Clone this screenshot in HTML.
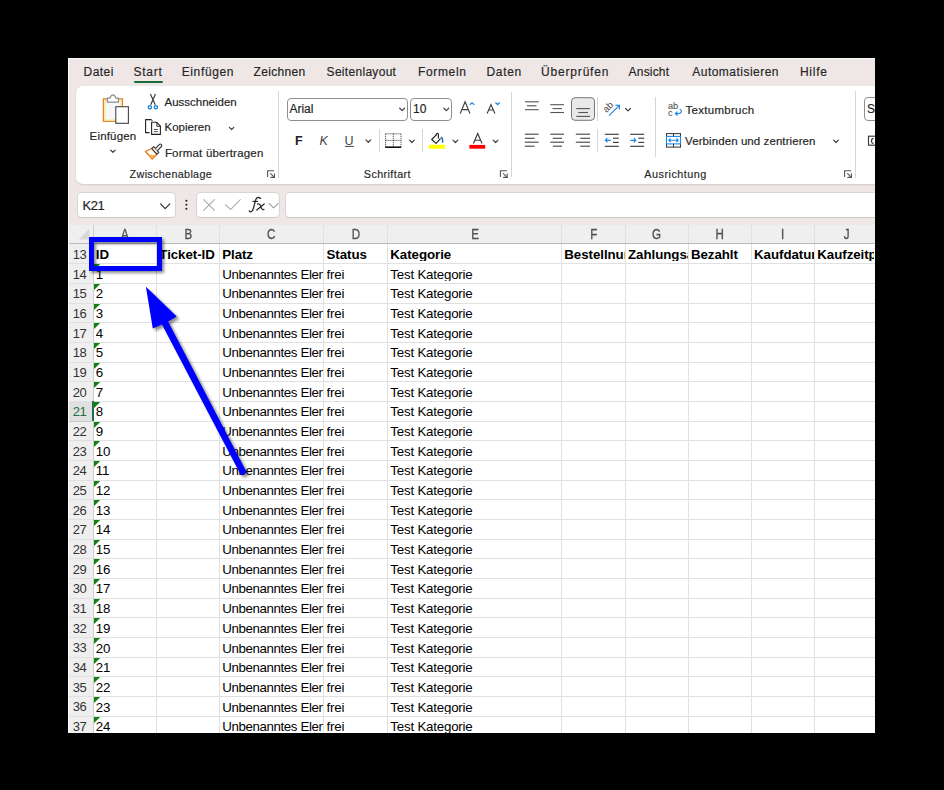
<!DOCTYPE html>
<html><head><meta charset="utf-8"><style>
html,body{margin:0;padding:0;}
body{width:944px;height:790px;background:#000;position:relative;overflow:hidden;font-family:"Liberation Sans", sans-serif;}
.t{position:absolute;white-space:pre;font-family:"Liberation Sans", sans-serif;}
.cell{overflow:hidden;}
</style></head><body>
<div style="position:absolute;left:68px;top:58px;width:807px;height:675px;background:#EFE7E6;"></div>
<div style="position:absolute;left:68px;top:58px;width:807px;height:1px;background:#FAFAFA;"></div>
<div style="position:absolute;left:68px;top:58px;width:1px;height:675px;background:#FAFAFA;"></div>
<div class="t" style="left:83.5px;top:65.64px;font-size:12px;line-height:12px;font-weight:400;color:#262626;letter-spacing:0.48px;-webkit-text-stroke:0.18px currentColor;">Datei</div>
<div class="t" style="left:133.5px;top:65.64px;font-size:12px;line-height:12px;font-weight:400;color:#262626;letter-spacing:0.75px;-webkit-text-stroke:0.18px currentColor;">Start</div>
<div class="t" style="left:181.7px;top:65.64px;font-size:12px;line-height:12px;font-weight:400;color:#262626;letter-spacing:0.63px;-webkit-text-stroke:0.18px currentColor;">Einfügen</div>
<div class="t" style="left:253.5px;top:65.64px;font-size:12px;line-height:12px;font-weight:400;color:#262626;letter-spacing:0.34px;-webkit-text-stroke:0.18px currentColor;">Zeichnen</div>
<div class="t" style="left:326.59999999999997px;top:65.64px;font-size:12px;line-height:12px;font-weight:400;color:#262626;letter-spacing:0.30000000000000004px;-webkit-text-stroke:0.18px currentColor;">Seitenlayout</div>
<div class="t" style="left:418.09999999999997px;top:65.64px;font-size:12px;line-height:12px;font-weight:400;color:#262626;letter-spacing:0.63px;-webkit-text-stroke:0.18px currentColor;">Formeln</div>
<div class="t" style="left:486.4px;top:65.64px;font-size:12px;line-height:12px;font-weight:400;color:#262626;letter-spacing:0.72px;-webkit-text-stroke:0.18px currentColor;">Daten</div>
<div class="t" style="left:541.1px;top:65.64px;font-size:12px;line-height:12px;font-weight:400;color:#262626;letter-spacing:0.81px;-webkit-text-stroke:0.18px currentColor;">Überprüfen</div>
<div class="t" style="left:628.6px;top:65.64px;font-size:12px;line-height:12px;font-weight:400;color:#262626;letter-spacing:0.18px;-webkit-text-stroke:0.18px currentColor;">Ansicht</div>
<div class="t" style="left:692.3000000000001px;top:65.64px;font-size:12px;line-height:12px;font-weight:400;color:#262626;letter-spacing:0.47000000000000003px;-webkit-text-stroke:0.18px currentColor;">Automatisieren</div>
<div class="t" style="left:799.9000000000001px;top:65.64px;font-size:12px;line-height:12px;font-weight:400;color:#262626;letter-spacing:0.75px;-webkit-text-stroke:0.18px currentColor;">Hilfe</div>
<div style="position:absolute;left:134.3px;top:81px;width:29px;height:2px;background:#1B6B3A;border-radius:1px"></div>
<div style="position:absolute;left:76px;top:86px;width:820px;height:98px;background:#FFFFFF;border-radius:7px;box-shadow:0 1px 2px rgba(0,0,0,0.12)"></div>
<div class="t" style="left:89.6px;top:130.77px;font-size:11.5px;line-height:11.5px;font-weight:400;color:#262626;letter-spacing:0.17px;-webkit-text-stroke:0.18px currentColor;">Einfügen</div>
<div class="t" style="left:164.5px;top:96.77px;font-size:11.5px;line-height:11.5px;font-weight:400;color:#262626;letter-spacing:0px;-webkit-text-stroke:0.18px currentColor;">Ausschneiden</div>
<div class="t" style="left:164.5px;top:121.87px;font-size:11.5px;line-height:11.5px;font-weight:400;color:#262626;letter-spacing:0px;-webkit-text-stroke:0.18px currentColor;">Kopieren</div>
<div class="t" style="left:164.9px;top:147.67px;font-size:11.5px;line-height:11.5px;font-weight:400;color:#262626;letter-spacing:0.2px;-webkit-text-stroke:0.18px currentColor;">Format übertragen</div>
<div class="t" style="left:129.60000000000002px;top:169.06px;font-size:10.8px;line-height:10.8px;font-weight:400;color:#2A2A2A;letter-spacing:0.32px;-webkit-text-stroke:0.18px currentColor;">Zwischenablage</div>
<div class="t" style="left:363.8px;top:168.96px;font-size:10.8px;line-height:10.8px;font-weight:400;color:#2A2A2A;letter-spacing:0.39px;-webkit-text-stroke:0.18px currentColor;">Schriftart</div>
<div class="t" style="left:644.3px;top:169.06px;font-size:10.8px;line-height:10.8px;font-weight:400;color:#2A2A2A;letter-spacing:0.5px;-webkit-text-stroke:0.18px currentColor;">Ausrichtung</div>
<div class="t" style="left:685.5px;top:104.67px;font-size:11.5px;line-height:11.5px;font-weight:400;color:#262626;letter-spacing:0.29px;-webkit-text-stroke:0.18px currentColor;">Textumbruch</div>
<div class="t" style="left:685.0999999999999px;top:136.37px;font-size:11.5px;line-height:11.5px;font-weight:400;color:#262626;letter-spacing:0.08px;-webkit-text-stroke:0.18px currentColor;">Verbinden und zentrieren</div>
<div style="position:absolute;left:278.2px;top:91px;width:1px;height:86.69999999999999px;background:#D6D6D6;"></div>
<div style="position:absolute;left:511.0px;top:91.6px;width:1px;height:85.80000000000001px;background:#D6D6D6;"></div>
<div style="position:absolute;left:855.1px;top:91px;width:1px;height:86.5px;background:#D6D6D6;"></div>
<div style="position:absolute;left:378.9px;top:129.4px;width:1px;height:22.900000000000006px;background:#D6D6D6;"></div>
<div style="position:absolute;left:421.8px;top:129.4px;width:1px;height:22.900000000000006px;background:#D6D6D6;"></div>
<div style="position:absolute;left:596.9px;top:97px;width:1px;height:23.5px;background:#D6D6D6;"></div>
<div style="position:absolute;left:596.9px;top:129px;width:1px;height:23.30000000000001px;background:#D6D6D6;"></div>
<div style="position:absolute;left:655.0px;top:96.7px;width:1px;height:60.8px;background:#D6D6D6;"></div>
<div style="position:absolute;left:287px;top:97.6px;width:120.5px;height:23.2px;background:#fff;box-sizing:border-box;border:1px solid #8F8F8F;border-radius:4px"></div>
<div class="t" style="left:289.4px;top:103.14px;font-size:12px;line-height:12px;font-weight:400;color:#1F1F1F;letter-spacing:0px;-webkit-text-stroke:0.18px currentColor;">Arial</div>
<div style="position:absolute;left:410.3px;top:97.6px;width:42.2px;height:23.2px;background:#fff;box-sizing:border-box;border:1px solid #8F8F8F;border-radius:4px"></div>
<div class="t" style="left:413.0px;top:103.34px;font-size:12px;line-height:12px;font-weight:400;color:#1F1F1F;letter-spacing:0px;-webkit-text-stroke:0.18px currentColor;">10</div>
<div style="position:absolute;left:864.3px;top:97.4px;width:30px;height:23.3px;background:#fff;box-sizing:border-box;border:1px solid #8F8F8F;border-radius:4px"></div>
<div class="t" style="left:867px;top:103.34px;font-size:12px;line-height:12px;font-weight:400;color:#1F1F1F;letter-spacing:0px;-webkit-text-stroke:0.18px currentColor;">St</div>
<div style="position:absolute;left:76.5px;top:192px;width:99.8px;height:25.7px;background:#fff;box-sizing:border-box;border:1px solid #D9D5D5;border-bottom-color:#CAC6C6;border-radius:5px"></div>
<div class="t" style="left:82.6px;top:198.90px;font-size:13px;line-height:13px;font-weight:400;color:#1F1F1F;letter-spacing:-0.45px;-webkit-text-stroke:0.18px currentColor;">K21</div>
<div style="position:absolute;left:196.3px;top:192px;width:84.2px;height:25.7px;background:#fff;box-sizing:border-box;border:1px solid #D9D5D5;border-bottom-color:#CAC6C6;border-radius:5px"></div>
<div style="position:absolute;left:285.2px;top:192px;width:600px;height:25.7px;background:#fff;box-sizing:border-box;border:1px solid #D9D5D5;border-bottom-color:#CAC6C6;border-radius:5px"></div>
<svg style="position:absolute;left:0px;top:0px;pointer-events:none" width="944" height="790" viewBox="0 0 944 790"><rect x="103.4" y="98.9" width="19" height="22.4" fill="#FBF6EC" stroke="#E9821A" stroke-width="1.3"/><rect x="105" y="100.4" width="15.8" height="19.5" fill="#F7F7F7" stroke="#FBE7A6" stroke-width="1.2"/><path d="M107.3 102.2 V98.2 H109.8 C110.5 96.4 111.5 94.8 112.9 94.8 C114.3 94.8 115.3 96.4 116 98.2 H118.5 V102.2 Z" fill="#fff" stroke="#8C8C8C" stroke-width="1.2" stroke-linejoin="round"/><rect x="115.8" y="106.7" width="12.6" height="16.6" fill="#fff" stroke="#444" stroke-width="1.1"/><path d="M110.60 150.10 L112.90 152.30 L115.20 150.10" fill="none" stroke="#444" stroke-width="1.3" stroke-linecap="round" stroke-linejoin="round"/><path d="M150.4 94 L155.2 104.8 M155.5 94 L150.7 104.8" stroke="#333" stroke-width="1.1" fill="none"/><circle cx="149.9" cy="107.3" r="1.6" fill="none" stroke="#1A7FD4" stroke-width="1.3"/><circle cx="155.9" cy="107.3" r="1.6" fill="none" stroke="#1A7FD4" stroke-width="1.3"/><path d="M149.6 132.6 H145.6 V119.6 H151 L152.4 120.6" fill="none" stroke="#222" stroke-width="1.1" stroke-linejoin="round"/><path d="M151.6 122.3 H156.8 L160.4 126.2 V134.4 H151.6 Z" fill="#fff" stroke="#222" stroke-width="1.1" stroke-linejoin="round"/><path d="M156.8 122.3 V126.3 H160.4" fill="none" stroke="#222" stroke-width="0.9"/><path d="M153.9 129.5 H157.8 M153.9 131.6 H157.8" stroke="#333" stroke-width="0.9"/><path d="M145.6 151.5 L151.6 148.5 L157 154.2 L152.2 159 Z" fill="#fff" stroke="#E8740F" stroke-width="1.3" stroke-linejoin="round"/><path d="M147.4 154.3 L155.4 155.8 L152.2 159 Z" fill="#F09A30"/><path d="M150.2 156 L153.4 156.5 L152 157.8 Z" fill="#F8E08A"/><path d="M151.9 148.5 L153.8 146.7 L158.8 152.3 L156.9 154.1 Z" fill="#fff" stroke="#333" stroke-width="1.1" stroke-linejoin="round"/><path d="M155.4 148.6 L159.4 144.4 C159.9 143.9 160.7 143.9 161.2 144.4 L161.4 144.7 C161.9 145.2 161.9 146 161.4 146.5 L157.4 150.7" fill="#fff" stroke="#333" stroke-width="1.1" stroke-linejoin="round"/><path d="M229.40 127.30 L231.60 129.50 L233.80 127.30" fill="none" stroke="#444" stroke-width="1.2" stroke-linecap="round" stroke-linejoin="round"/><g transform="translate(0,0)" fill="none" stroke="#555" stroke-width="1.1" stroke-linecap="round"><path d="M267.6 176.4 V170.7 H273.6"/><path d="M270.6 173.6 L274.3 177.3"/><path d="M270.8 177.4 H274.4 V173.8"/></g><g transform="translate(232.8,0)" fill="none" stroke="#555" stroke-width="1.1" stroke-linecap="round"><path d="M267.6 176.4 V170.7 H273.6"/><path d="M270.6 173.6 L274.3 177.3"/><path d="M270.8 177.4 H274.4 V173.8"/></g><g transform="translate(577,0)" fill="none" stroke="#555" stroke-width="1.1" stroke-linecap="round"><path d="M267.6 176.4 V170.7 H273.6"/><path d="M270.6 173.6 L274.3 177.3"/><path d="M270.8 177.4 H274.4 V173.8"/></g><path d="M399.70 108.20 L402.10 110.60 L404.50 108.20" fill="none" stroke="#444" stroke-width="1.25" stroke-linecap="round" stroke-linejoin="round"/><path d="M443.90 108.20 L446.30 110.60 L448.70 108.20" fill="none" stroke="#444" stroke-width="1.25" stroke-linecap="round" stroke-linejoin="round"/><path d="M365.90 139.90 L368.30 142.30 L370.70 139.90" fill="none" stroke="#444" stroke-width="1.25" stroke-linecap="round" stroke-linejoin="round"/><path d="M409.50 140.10 L411.90 142.50 L414.30 140.10" fill="none" stroke="#444" stroke-width="1.25" stroke-linecap="round" stroke-linejoin="round"/><path d="M453.00 140.10 L455.40 142.50 L457.80 140.10" fill="none" stroke="#444" stroke-width="1.25" stroke-linecap="round" stroke-linejoin="round"/><path d="M493.20 140.10 L495.60 142.50 L498.00 140.10" fill="none" stroke="#444" stroke-width="1.25" stroke-linecap="round" stroke-linejoin="round"/><path d="M625.60 108.50 L628.00 110.90 L630.40 108.50" fill="none" stroke="#444" stroke-width="1.25" stroke-linecap="round" stroke-linejoin="round"/><path d="M833.60 140.10 L836.00 142.50 L838.40 140.10" fill="none" stroke="#444" stroke-width="1.25" stroke-linecap="round" stroke-linejoin="round"/><path d="M460.2 113.6 L465.1 101.8 L470 113.6 M462.4 109.6 H467.8" fill="none" stroke="#3A3A3A" stroke-width="1.15"/><path d="M469.7 104.8 L472 102.8 L474.4 104.8" fill="none" stroke="#2B88D8" stroke-width="1.3"/><path d="M487.1 113.6 L491 104.6 L494.9 113.6 M488.6 110 H493.4" fill="none" stroke="#3A3A3A" stroke-width="1.15"/><path d="M495.4 102.6 L497.6 104.6 L499.8 102.6" fill="none" stroke="#2B88D8" stroke-width="1.3"/><text x="295" y="144.8" font-family="Liberation Sans" font-weight="700" font-size="12.5" fill="#222">F</text><text x="319.5" y="144.8" font-family="Liberation Sans" font-style="italic" font-size="12.5" fill="#444">K</text><text x="344.6" y="144.8" font-family="Liberation Sans" font-size="12.5" fill="#444">U</text><path d="M345 146.4 H354" stroke="#444" stroke-width="1"/><path d="M385.6 133.8 H401 M385.6 133.8 V147 M401 133.8 V147 M393.3 133.8 V147 M385.6 140.4 H401" fill="none" stroke="#333" stroke-width="1" stroke-dasharray="1 1"/><path d="M385.2 147.2 H401.2" stroke="#111" stroke-width="1.6"/><path d="M440.6 138.3 L436.1 143.4 L431.7 139.5 L436.3 134.9" fill="#fff" stroke="#222" stroke-width="1.15" stroke-linejoin="round"/><path d="M436.3 135.4 V134.2 C436.3 132.9 438.4 132.9 438.4 134.2 V138.6" fill="none" stroke="#222" stroke-width="1.15"/><path d="M440.9 137.2 C442.4 137.4 442.8 139.6 442.6 142.6" fill="none" stroke="#1565C0" stroke-width="1.5"/><rect x="429" y="144.8" width="16" height="4" fill="#FFFF00"/><path d="M473.4 143.4 L477.7 133.4 L482 143.4 M474.9 140.2 H480.5" fill="none" stroke="#3A3A3A" stroke-width="1.15"/><rect x="469.4" y="144.9" width="15.8" height="3.8" fill="#FF0000"/><rect x="571.5" y="97.7" width="23" height="22.6" rx="3.5" fill="#E9E9E9" stroke="#777" stroke-width="1"/><path d="M525 101.8 H538.7" stroke="#555" stroke-width="1.1"/><path d="M527 105.8 H536.5" stroke="#555" stroke-width="1.1"/><path d="M525 109.7 H538.7" stroke="#555" stroke-width="1.1"/><path d="M550.3 104.7 H564" stroke="#555" stroke-width="1.1"/><path d="M552.5 108.6 H562" stroke="#555" stroke-width="1.1"/><path d="M550.3 112.5 H564" stroke="#555" stroke-width="1.1"/><path d="M576.3 108.6 H590" stroke="#555" stroke-width="1.1"/><path d="M578.3 112.5 H588" stroke="#555" stroke-width="1.1"/><path d="M576.3 116.4 H590" stroke="#555" stroke-width="1.1"/><path d="M524.8 134.2 H538.6" stroke="#444" stroke-width="1.1"/><path d="M524.8 138.3 H534.5" stroke="#444" stroke-width="1.1"/><path d="M524.8 142.2 H538.6" stroke="#444" stroke-width="1.1"/><path d="M524.8 146.2 H534.5" stroke="#444" stroke-width="1.1"/><path d="M550.3 134.2 H564" stroke="#444" stroke-width="1.1"/><path d="M552.8 138.3 H562" stroke="#444" stroke-width="1.1"/><path d="M550.3 142.2 H564" stroke="#444" stroke-width="1.1"/><path d="M552.8 146.2 H562" stroke="#444" stroke-width="1.1"/><path d="M575.8 134.2 H590" stroke="#444" stroke-width="1.1"/><path d="M580.3 138.3 H590" stroke="#444" stroke-width="1.1"/><path d="M575.8 142.2 H590" stroke="#444" stroke-width="1.1"/><path d="M580.3 146.2 H590" stroke="#444" stroke-width="1.1"/><path d="M604.8 134.3 H618.8" stroke="#333" stroke-width="1.1"/><path d="M604.8 146.3 H618.8" stroke="#333" stroke-width="1.1"/><path d="M613.0 138.2 H618.8" stroke="#333" stroke-width="1.1"/><path d="M613.0 142.4 H618.8" stroke="#333" stroke-width="1.1"/><path d="M610.8 140.3 H605.4 M607.4 138.2 L605.4 140.3 L607.4 142.4" fill="none" stroke="#1E88E5" stroke-width="1.2"/><path d="M630.2 134.3 H644.2" stroke="#333" stroke-width="1.1"/><path d="M630.2 146.3 H644.2" stroke="#333" stroke-width="1.1"/><path d="M638.4000000000001 138.2 H644.2" stroke="#333" stroke-width="1.1"/><path d="M638.4000000000001 142.4 H644.2" stroke="#333" stroke-width="1.1"/><path d="M630.4000000000001 140.3 H635.8000000000001 M633.8000000000001 138.2 L635.8000000000001 140.3 L633.8000000000001 142.4" fill="none" stroke="#1E88E5" stroke-width="1.2"/><text x="0" y="0" font-family="Liberation Sans" font-size="9.5" fill="#444" transform="translate(606.5,113) rotate(-45)">ab</text><path d="M609 115.6 L619.2 105.6 M615.4 105.4 H619.4 V109.4" fill="none" stroke="#2B88D8" stroke-width="1.2"/><text x="668" y="108.8" font-family="Liberation Sans" font-size="9.2" fill="#444">ab</text><text x="668" y="116.2" font-family="Liberation Sans" font-size="9.2" fill="#444">c</text><path d="M680 109.2 C682.6 110.8 681.4 113.6 678 113.6 H675.4 M677.4 111.6 L675.4 113.6 L677.4 115.6" fill="none" stroke="#1E88E5" stroke-width="1.2"/><rect x="666.5" y="133.6" width="14" height="13.5" fill="#fff" stroke="#333" stroke-width="1"/><rect x="666.5" y="136.4" width="14" height="7.5" fill="#fff" stroke="#1E88E5" stroke-width="1.1"/><path d="M673.5 133.6 V136.4 M673.5 143.9 V147.1" stroke="#333" stroke-width="1"/><path d="M668.8 140.2 H678.2 M670.6 138.4 L668.8 140.2 L670.6 142 M676.4 138.4 L678.2 140.2 L676.4 142" fill="none" stroke="#1E88E5" stroke-width="1.1"/><rect x="868.5" y="136.2" width="10" height="9" fill="#fff" stroke="#333" stroke-width="1.1"/><path d="M873.5 138.4 C871 138.4 870.6 143.4 873.5 143.4" fill="none" stroke="#333" stroke-width="1.1"/></svg>
<svg style="position:absolute;left:0px;top:0px;pointer-events:none" width="944" height="790" viewBox="0 0 944 790"><path d="M160.60 203.90 L165.20 208.70 L169.80 203.90" fill="none" stroke="#333" stroke-width="1.2" stroke-linecap="round" stroke-linejoin="round"/><circle cx="186.4" cy="200.8" r="1.05" fill="#222"/><circle cx="186.4" cy="204.8" r="1.05" fill="#222"/><circle cx="186.4" cy="208.7" r="1.05" fill="#222"/><path d="M203.3 199.4 L214.8 210.7 M214.8 199.4 L203.3 210.7" stroke="#A8A8A8" stroke-width="1.1"/><path d="M225.2 204.5 L230.7 209.4 L240.6 199.3" fill="none" stroke="#B0B0B0" stroke-width="1.1"/><path d="M249.2 210.9 C250.6 212.8 252.6 211.6 253.4 208.4 L255.6 200.2 C256.3 197.8 258.2 196.6 260.6 198.3" fill="none" stroke="#2A2A2A" stroke-width="1.3" stroke-linecap="round"/><path d="M252.4 201.4 H258" stroke="#222" stroke-width="1.1"/><path d="M257.4 204 Q259.8 203.2 260.8 206.6 Q261.8 210.2 264 209.4 M264.2 203.9 L256.8 210" fill="none" stroke="#2A2A2A" stroke-width="1.25" stroke-linecap="round"/><path d="M269.00 203.40 L273.60 207.80 L278.20 203.40" fill="none" stroke="#999" stroke-width="1.1" stroke-linecap="round" stroke-linejoin="round"/></svg>
<div style="position:absolute;left:69px;top:224.7px;width:806px;height:508.3px;background:#FFFFFF;"></div>
<div style="position:absolute;left:69px;top:224.7px;width:806px;height:19.30000000000001px;background:#EFEFEF;"></div>
<div style="position:absolute;left:69px;top:224.7px;width:24px;height:508.3px;background:#EFEFEF;"></div>
<div style="position:absolute;left:69px;top:263.18px;width:806px;height:1px;background:#E0E0E0;"></div>
<div style="position:absolute;left:69px;top:282.86px;width:806px;height:1px;background:#E0E0E0;"></div>
<div style="position:absolute;left:69px;top:302.54px;width:806px;height:1px;background:#E0E0E0;"></div>
<div style="position:absolute;left:69px;top:322.22px;width:806px;height:1px;background:#E0E0E0;"></div>
<div style="position:absolute;left:69px;top:341.9px;width:806px;height:1px;background:#E0E0E0;"></div>
<div style="position:absolute;left:69px;top:361.58px;width:806px;height:1px;background:#E0E0E0;"></div>
<div style="position:absolute;left:69px;top:381.26px;width:806px;height:1px;background:#E0E0E0;"></div>
<div style="position:absolute;left:69px;top:400.94px;width:806px;height:1px;background:#E0E0E0;"></div>
<div style="position:absolute;left:69px;top:420.62px;width:806px;height:1px;background:#E0E0E0;"></div>
<div style="position:absolute;left:69px;top:440.3px;width:806px;height:1px;background:#E0E0E0;"></div>
<div style="position:absolute;left:69px;top:459.98px;width:806px;height:1px;background:#E0E0E0;"></div>
<div style="position:absolute;left:69px;top:479.65999999999997px;width:806px;height:1px;background:#E0E0E0;"></div>
<div style="position:absolute;left:69px;top:499.34000000000003px;width:806px;height:1px;background:#E0E0E0;"></div>
<div style="position:absolute;left:69px;top:519.02px;width:806px;height:1px;background:#E0E0E0;"></div>
<div style="position:absolute;left:69px;top:538.7px;width:806px;height:1px;background:#E0E0E0;"></div>
<div style="position:absolute;left:69px;top:558.38px;width:806px;height:1px;background:#E0E0E0;"></div>
<div style="position:absolute;left:69px;top:578.06px;width:806px;height:1px;background:#E0E0E0;"></div>
<div style="position:absolute;left:69px;top:597.74px;width:806px;height:1px;background:#E0E0E0;"></div>
<div style="position:absolute;left:69px;top:617.4200000000001px;width:806px;height:1px;background:#E0E0E0;"></div>
<div style="position:absolute;left:69px;top:637.1px;width:806px;height:1px;background:#E0E0E0;"></div>
<div style="position:absolute;left:69px;top:656.78px;width:806px;height:1px;background:#E0E0E0;"></div>
<div style="position:absolute;left:69px;top:676.46px;width:806px;height:1px;background:#E0E0E0;"></div>
<div style="position:absolute;left:69px;top:696.14px;width:806px;height:1px;background:#E0E0E0;"></div>
<div style="position:absolute;left:69px;top:715.8199999999999px;width:806px;height:1px;background:#E0E0E0;"></div>
<div style="position:absolute;left:92.5px;top:224.7px;width:1px;height:508.3px;background:#CFCFCF;"></div>
<div style="position:absolute;left:156.0px;top:224.7px;width:1px;height:508.3px;background:#E0E0E0;"></div>
<div style="position:absolute;left:218.9px;top:224.7px;width:1px;height:508.3px;background:#E0E0E0;"></div>
<div style="position:absolute;left:323.25px;top:224.7px;width:1px;height:508.3px;background:#E0E0E0;"></div>
<div style="position:absolute;left:387.0px;top:224.7px;width:1px;height:508.3px;background:#E0E0E0;"></div>
<div style="position:absolute;left:561.0px;top:224.7px;width:1px;height:508.3px;background:#E0E0E0;"></div>
<div style="position:absolute;left:624.75px;top:224.7px;width:1px;height:508.3px;background:#E0E0E0;"></div>
<div style="position:absolute;left:687.6px;top:224.7px;width:1px;height:508.3px;background:#E0E0E0;"></div>
<div style="position:absolute;left:750.75px;top:224.7px;width:1px;height:508.3px;background:#E0E0E0;"></div>
<div style="position:absolute;left:814.0px;top:224.7px;width:1px;height:508.3px;background:#E0E0E0;"></div>
<div style="position:absolute;left:69px;top:243px;width:806px;height:1px;background:#B9B9B9;"></div>
<div style="position:absolute;left:69px;top:401.44px;width:24px;height:19.68px;background:#E0E0E0;"></div>
<div style="position:absolute;left:92px;top:400.94px;width:2px;height:20.18px;background:#1E7145;"></div>
<div style="position:absolute;left:69px;top:420.62px;width:23px;height:1px;background:#C8C8C8;"></div>
<div class="t" style="left:93px;width:63.5px;text-align:center;top:227.82px;font-size:13.8px;line-height:13.8px;color:#505050;transform:scaleX(0.84);-webkit-text-stroke:0.3px #505050">A</div>
<div class="t" style="left:156.5px;width:62.900000000000006px;text-align:center;top:227.82px;font-size:13.8px;line-height:13.8px;color:#505050;transform:scaleX(0.84);-webkit-text-stroke:0.3px #505050">B</div>
<div class="t" style="left:219.4px;width:104.35px;text-align:center;top:227.82px;font-size:13.8px;line-height:13.8px;color:#505050;transform:scaleX(0.84);-webkit-text-stroke:0.3px #505050">C</div>
<div class="t" style="left:323.75px;width:63.75px;text-align:center;top:227.82px;font-size:13.8px;line-height:13.8px;color:#505050;transform:scaleX(0.84);-webkit-text-stroke:0.3px #505050">D</div>
<div class="t" style="left:387.5px;width:174.0px;text-align:center;top:227.82px;font-size:13.8px;line-height:13.8px;color:#505050;transform:scaleX(0.84);-webkit-text-stroke:0.3px #505050">E</div>
<div class="t" style="left:561.5px;width:63.75px;text-align:center;top:227.82px;font-size:13.8px;line-height:13.8px;color:#505050;transform:scaleX(0.84);-webkit-text-stroke:0.3px #505050">F</div>
<div class="t" style="left:625.25px;width:62.85000000000002px;text-align:center;top:227.82px;font-size:13.8px;line-height:13.8px;color:#505050;transform:scaleX(0.84);-webkit-text-stroke:0.3px #505050">G</div>
<div class="t" style="left:688.1px;width:63.14999999999998px;text-align:center;top:227.82px;font-size:13.8px;line-height:13.8px;color:#505050;transform:scaleX(0.84);-webkit-text-stroke:0.3px #505050">H</div>
<div class="t" style="left:751.25px;width:63.25px;text-align:center;top:227.82px;font-size:13.8px;line-height:13.8px;color:#505050;transform:scaleX(0.84);-webkit-text-stroke:0.3px #505050">I</div>
<div class="t" style="left:814.5px;width:63.299999999999955px;text-align:center;top:227.82px;font-size:13.8px;line-height:13.8px;color:#505050;transform:scaleX(0.84);-webkit-text-stroke:0.3px #505050">J</div>
<svg style="position:absolute;left:78px;top:228px;" width="12" height="12" viewBox="0 0 12 12"><path d="M11.5 0.5 L11.5 11.5 L0.5 11.5 Z" fill="#D9D9D9"/></svg>
<div class="t" style="left:67.6px;width:24px;text-align:center;top:247.83px;font-size:13px;line-height:13px;letter-spacing:-0.5px;color:#333">13</div>
<div class="t cell" style="left:95.8px;width:60.2px;top:247.92px;font-size:13.3px;line-height:13.3px;font-weight:700;letter-spacing:-0.05px;color:#000">ID</div>
<div class="t cell" style="left:159.3px;width:59.60000000000001px;top:247.92px;font-size:13.3px;line-height:13.3px;font-weight:700;letter-spacing:-0.05px;color:#000">Ticket-ID</div>
<div class="t cell" style="left:222.20000000000002px;width:101.05px;top:247.92px;font-size:13.3px;line-height:13.3px;font-weight:700;letter-spacing:-0.05px;color:#000">Platz</div>
<div class="t cell" style="left:326.55px;width:60.45px;top:247.92px;font-size:13.3px;line-height:13.3px;font-weight:700;letter-spacing:-0.05px;color:#000">Status</div>
<div class="t cell" style="left:390.3px;width:170.7px;top:247.92px;font-size:13.3px;line-height:13.3px;font-weight:700;letter-spacing:-0.05px;color:#000">Kategorie</div>
<div class="t cell" style="left:564.3px;width:60.45px;top:247.92px;font-size:13.3px;line-height:13.3px;font-weight:700;letter-spacing:-0.05px;color:#000">Bestellnummer</div>
<div class="t cell" style="left:628.05px;width:59.550000000000026px;top:247.92px;font-size:13.3px;line-height:13.3px;font-weight:700;letter-spacing:-0.05px;color:#000">Zahlungsart</div>
<div class="t cell" style="left:690.9px;width:59.84999999999998px;top:247.92px;font-size:13.3px;line-height:13.3px;font-weight:700;letter-spacing:-0.05px;color:#000">Bezahlt</div>
<div class="t cell" style="left:754.05px;width:59.95px;top:247.92px;font-size:13.3px;line-height:13.3px;font-weight:700;letter-spacing:-0.05px;color:#000">Kaufdatum</div>
<div class="t cell" style="left:817.3px;width:57.2px;top:247.92px;font-size:13.3px;line-height:13.3px;font-weight:700;letter-spacing:-0.05px;color:#000">Kaufzeitpunkt</div>
<div class="t" style="left:67.6px;width:24px;text-align:center;top:267.51px;font-size:13px;line-height:13px;letter-spacing:-0.5px;color:#333">14</div>
<div class="t cell" style="left:95.8px;width:60.2px;top:267.60px;font-size:13.3px;line-height:13.3px;font-weight:400;letter-spacing:-0.2px;color:#000">1</div>
<svg style="position:absolute;left:93.5px;top:264.18px;" width="6" height="6" viewBox="0 0 6 6"><path d="M0 0 H6.2 L0 6 Z" fill="#118011"/></svg>
<div class="t cell" style="left:222.20000000000002px;width:101.05px;top:267.60px;font-size:13.3px;line-height:13.3px;font-weight:400;letter-spacing:-0.38px;color:#000">Unbenanntes Element</div>
<div class="t cell" style="left:326.55px;width:60.45px;top:267.60px;font-size:13.3px;line-height:13.3px;font-weight:400;letter-spacing:-0.2px;color:#000">frei</div>
<div class="t cell" style="left:390.3px;width:170.7px;top:267.60px;font-size:13.3px;line-height:13.3px;font-weight:400;letter-spacing:-0.2px;color:#000">Test Kategorie</div>
<div class="t" style="left:67.6px;width:24px;text-align:center;top:287.19px;font-size:13px;line-height:13px;letter-spacing:-0.5px;color:#333">15</div>
<div class="t cell" style="left:95.8px;width:60.2px;top:287.28px;font-size:13.3px;line-height:13.3px;font-weight:400;letter-spacing:-0.2px;color:#000">2</div>
<svg style="position:absolute;left:93.5px;top:283.86px;" width="6" height="6" viewBox="0 0 6 6"><path d="M0 0 H6.2 L0 6 Z" fill="#118011"/></svg>
<div class="t cell" style="left:222.20000000000002px;width:101.05px;top:287.28px;font-size:13.3px;line-height:13.3px;font-weight:400;letter-spacing:-0.38px;color:#000">Unbenanntes Element</div>
<div class="t cell" style="left:326.55px;width:60.45px;top:287.28px;font-size:13.3px;line-height:13.3px;font-weight:400;letter-spacing:-0.2px;color:#000">frei</div>
<div class="t cell" style="left:390.3px;width:170.7px;top:287.28px;font-size:13.3px;line-height:13.3px;font-weight:400;letter-spacing:-0.2px;color:#000">Test Kategorie</div>
<div class="t" style="left:67.6px;width:24px;text-align:center;top:306.87px;font-size:13px;line-height:13px;letter-spacing:-0.5px;color:#333">16</div>
<div class="t cell" style="left:95.8px;width:60.2px;top:306.96px;font-size:13.3px;line-height:13.3px;font-weight:400;letter-spacing:-0.2px;color:#000">3</div>
<svg style="position:absolute;left:93.5px;top:303.54px;" width="6" height="6" viewBox="0 0 6 6"><path d="M0 0 H6.2 L0 6 Z" fill="#118011"/></svg>
<div class="t cell" style="left:222.20000000000002px;width:101.05px;top:306.96px;font-size:13.3px;line-height:13.3px;font-weight:400;letter-spacing:-0.38px;color:#000">Unbenanntes Element</div>
<div class="t cell" style="left:326.55px;width:60.45px;top:306.96px;font-size:13.3px;line-height:13.3px;font-weight:400;letter-spacing:-0.2px;color:#000">frei</div>
<div class="t cell" style="left:390.3px;width:170.7px;top:306.96px;font-size:13.3px;line-height:13.3px;font-weight:400;letter-spacing:-0.2px;color:#000">Test Kategorie</div>
<div class="t" style="left:67.6px;width:24px;text-align:center;top:326.55px;font-size:13px;line-height:13px;letter-spacing:-0.5px;color:#333">17</div>
<div class="t cell" style="left:95.8px;width:60.2px;top:326.64px;font-size:13.3px;line-height:13.3px;font-weight:400;letter-spacing:-0.2px;color:#000">4</div>
<svg style="position:absolute;left:93.5px;top:323.22px;" width="6" height="6" viewBox="0 0 6 6"><path d="M0 0 H6.2 L0 6 Z" fill="#118011"/></svg>
<div class="t cell" style="left:222.20000000000002px;width:101.05px;top:326.64px;font-size:13.3px;line-height:13.3px;font-weight:400;letter-spacing:-0.38px;color:#000">Unbenanntes Element</div>
<div class="t cell" style="left:326.55px;width:60.45px;top:326.64px;font-size:13.3px;line-height:13.3px;font-weight:400;letter-spacing:-0.2px;color:#000">frei</div>
<div class="t cell" style="left:390.3px;width:170.7px;top:326.64px;font-size:13.3px;line-height:13.3px;font-weight:400;letter-spacing:-0.2px;color:#000">Test Kategorie</div>
<div class="t" style="left:67.6px;width:24px;text-align:center;top:346.23px;font-size:13px;line-height:13px;letter-spacing:-0.5px;color:#333">18</div>
<div class="t cell" style="left:95.8px;width:60.2px;top:346.32px;font-size:13.3px;line-height:13.3px;font-weight:400;letter-spacing:-0.2px;color:#000">5</div>
<svg style="position:absolute;left:93.5px;top:342.9px;" width="6" height="6" viewBox="0 0 6 6"><path d="M0 0 H6.2 L0 6 Z" fill="#118011"/></svg>
<div class="t cell" style="left:222.20000000000002px;width:101.05px;top:346.32px;font-size:13.3px;line-height:13.3px;font-weight:400;letter-spacing:-0.38px;color:#000">Unbenanntes Element</div>
<div class="t cell" style="left:326.55px;width:60.45px;top:346.32px;font-size:13.3px;line-height:13.3px;font-weight:400;letter-spacing:-0.2px;color:#000">frei</div>
<div class="t cell" style="left:390.3px;width:170.7px;top:346.32px;font-size:13.3px;line-height:13.3px;font-weight:400;letter-spacing:-0.2px;color:#000">Test Kategorie</div>
<div class="t" style="left:67.6px;width:24px;text-align:center;top:365.91px;font-size:13px;line-height:13px;letter-spacing:-0.5px;color:#333">19</div>
<div class="t cell" style="left:95.8px;width:60.2px;top:366.00px;font-size:13.3px;line-height:13.3px;font-weight:400;letter-spacing:-0.2px;color:#000">6</div>
<svg style="position:absolute;left:93.5px;top:362.58px;" width="6" height="6" viewBox="0 0 6 6"><path d="M0 0 H6.2 L0 6 Z" fill="#118011"/></svg>
<div class="t cell" style="left:222.20000000000002px;width:101.05px;top:366.00px;font-size:13.3px;line-height:13.3px;font-weight:400;letter-spacing:-0.38px;color:#000">Unbenanntes Element</div>
<div class="t cell" style="left:326.55px;width:60.45px;top:366.00px;font-size:13.3px;line-height:13.3px;font-weight:400;letter-spacing:-0.2px;color:#000">frei</div>
<div class="t cell" style="left:390.3px;width:170.7px;top:366.00px;font-size:13.3px;line-height:13.3px;font-weight:400;letter-spacing:-0.2px;color:#000">Test Kategorie</div>
<div class="t" style="left:67.6px;width:24px;text-align:center;top:385.59px;font-size:13px;line-height:13px;letter-spacing:-0.5px;color:#333">20</div>
<div class="t cell" style="left:95.8px;width:60.2px;top:385.68px;font-size:13.3px;line-height:13.3px;font-weight:400;letter-spacing:-0.2px;color:#000">7</div>
<svg style="position:absolute;left:93.5px;top:382.26px;" width="6" height="6" viewBox="0 0 6 6"><path d="M0 0 H6.2 L0 6 Z" fill="#118011"/></svg>
<div class="t cell" style="left:222.20000000000002px;width:101.05px;top:385.68px;font-size:13.3px;line-height:13.3px;font-weight:400;letter-spacing:-0.38px;color:#000">Unbenanntes Element</div>
<div class="t cell" style="left:326.55px;width:60.45px;top:385.68px;font-size:13.3px;line-height:13.3px;font-weight:400;letter-spacing:-0.2px;color:#000">frei</div>
<div class="t cell" style="left:390.3px;width:170.7px;top:385.68px;font-size:13.3px;line-height:13.3px;font-weight:400;letter-spacing:-0.2px;color:#000">Test Kategorie</div>
<div class="t" style="left:67.6px;width:24px;text-align:center;top:405.27px;font-size:13px;line-height:13px;letter-spacing:-0.5px;color:#1E6E3E">21</div>
<div class="t cell" style="left:95.8px;width:60.2px;top:405.36px;font-size:13.3px;line-height:13.3px;font-weight:400;letter-spacing:-0.2px;color:#000">8</div>
<svg style="position:absolute;left:93.5px;top:401.94px;" width="6" height="6" viewBox="0 0 6 6"><path d="M0 0 H6.2 L0 6 Z" fill="#118011"/></svg>
<div class="t cell" style="left:222.20000000000002px;width:101.05px;top:405.36px;font-size:13.3px;line-height:13.3px;font-weight:400;letter-spacing:-0.38px;color:#000">Unbenanntes Element</div>
<div class="t cell" style="left:326.55px;width:60.45px;top:405.36px;font-size:13.3px;line-height:13.3px;font-weight:400;letter-spacing:-0.2px;color:#000">frei</div>
<div class="t cell" style="left:390.3px;width:170.7px;top:405.36px;font-size:13.3px;line-height:13.3px;font-weight:400;letter-spacing:-0.2px;color:#000">Test Kategorie</div>
<div class="t" style="left:67.6px;width:24px;text-align:center;top:424.95px;font-size:13px;line-height:13px;letter-spacing:-0.5px;color:#333">22</div>
<div class="t cell" style="left:95.8px;width:60.2px;top:425.04px;font-size:13.3px;line-height:13.3px;font-weight:400;letter-spacing:-0.2px;color:#000">9</div>
<svg style="position:absolute;left:93.5px;top:421.62px;" width="6" height="6" viewBox="0 0 6 6"><path d="M0 0 H6.2 L0 6 Z" fill="#118011"/></svg>
<div class="t cell" style="left:222.20000000000002px;width:101.05px;top:425.04px;font-size:13.3px;line-height:13.3px;font-weight:400;letter-spacing:-0.38px;color:#000">Unbenanntes Element</div>
<div class="t cell" style="left:326.55px;width:60.45px;top:425.04px;font-size:13.3px;line-height:13.3px;font-weight:400;letter-spacing:-0.2px;color:#000">frei</div>
<div class="t cell" style="left:390.3px;width:170.7px;top:425.04px;font-size:13.3px;line-height:13.3px;font-weight:400;letter-spacing:-0.2px;color:#000">Test Kategorie</div>
<div class="t" style="left:67.6px;width:24px;text-align:center;top:444.63px;font-size:13px;line-height:13px;letter-spacing:-0.5px;color:#333">23</div>
<div class="t cell" style="left:95.8px;width:60.2px;top:444.72px;font-size:13.3px;line-height:13.3px;font-weight:400;letter-spacing:-0.2px;color:#000">10</div>
<svg style="position:absolute;left:93.5px;top:441.3px;" width="6" height="6" viewBox="0 0 6 6"><path d="M0 0 H6.2 L0 6 Z" fill="#118011"/></svg>
<div class="t cell" style="left:222.20000000000002px;width:101.05px;top:444.72px;font-size:13.3px;line-height:13.3px;font-weight:400;letter-spacing:-0.38px;color:#000">Unbenanntes Element</div>
<div class="t cell" style="left:326.55px;width:60.45px;top:444.72px;font-size:13.3px;line-height:13.3px;font-weight:400;letter-spacing:-0.2px;color:#000">frei</div>
<div class="t cell" style="left:390.3px;width:170.7px;top:444.72px;font-size:13.3px;line-height:13.3px;font-weight:400;letter-spacing:-0.2px;color:#000">Test Kategorie</div>
<div class="t" style="left:67.6px;width:24px;text-align:center;top:464.31px;font-size:13px;line-height:13px;letter-spacing:-0.5px;color:#333">24</div>
<div class="t cell" style="left:95.8px;width:60.2px;top:464.40px;font-size:13.3px;line-height:13.3px;font-weight:400;letter-spacing:-0.2px;color:#000">11</div>
<svg style="position:absolute;left:93.5px;top:460.98px;" width="6" height="6" viewBox="0 0 6 6"><path d="M0 0 H6.2 L0 6 Z" fill="#118011"/></svg>
<div class="t cell" style="left:222.20000000000002px;width:101.05px;top:464.40px;font-size:13.3px;line-height:13.3px;font-weight:400;letter-spacing:-0.38px;color:#000">Unbenanntes Element</div>
<div class="t cell" style="left:326.55px;width:60.45px;top:464.40px;font-size:13.3px;line-height:13.3px;font-weight:400;letter-spacing:-0.2px;color:#000">frei</div>
<div class="t cell" style="left:390.3px;width:170.7px;top:464.40px;font-size:13.3px;line-height:13.3px;font-weight:400;letter-spacing:-0.2px;color:#000">Test Kategorie</div>
<div class="t" style="left:67.6px;width:24px;text-align:center;top:483.99px;font-size:13px;line-height:13px;letter-spacing:-0.5px;color:#333">25</div>
<div class="t cell" style="left:95.8px;width:60.2px;top:484.08px;font-size:13.3px;line-height:13.3px;font-weight:400;letter-spacing:-0.2px;color:#000">12</div>
<svg style="position:absolute;left:93.5px;top:480.65999999999997px;" width="6" height="6" viewBox="0 0 6 6"><path d="M0 0 H6.2 L0 6 Z" fill="#118011"/></svg>
<div class="t cell" style="left:222.20000000000002px;width:101.05px;top:484.08px;font-size:13.3px;line-height:13.3px;font-weight:400;letter-spacing:-0.38px;color:#000">Unbenanntes Element</div>
<div class="t cell" style="left:326.55px;width:60.45px;top:484.08px;font-size:13.3px;line-height:13.3px;font-weight:400;letter-spacing:-0.2px;color:#000">frei</div>
<div class="t cell" style="left:390.3px;width:170.7px;top:484.08px;font-size:13.3px;line-height:13.3px;font-weight:400;letter-spacing:-0.2px;color:#000">Test Kategorie</div>
<div class="t" style="left:67.6px;width:24px;text-align:center;top:503.67px;font-size:13px;line-height:13px;letter-spacing:-0.5px;color:#333">26</div>
<div class="t cell" style="left:95.8px;width:60.2px;top:503.76px;font-size:13.3px;line-height:13.3px;font-weight:400;letter-spacing:-0.2px;color:#000">13</div>
<svg style="position:absolute;left:93.5px;top:500.34000000000003px;" width="6" height="6" viewBox="0 0 6 6"><path d="M0 0 H6.2 L0 6 Z" fill="#118011"/></svg>
<div class="t cell" style="left:222.20000000000002px;width:101.05px;top:503.76px;font-size:13.3px;line-height:13.3px;font-weight:400;letter-spacing:-0.38px;color:#000">Unbenanntes Element</div>
<div class="t cell" style="left:326.55px;width:60.45px;top:503.76px;font-size:13.3px;line-height:13.3px;font-weight:400;letter-spacing:-0.2px;color:#000">frei</div>
<div class="t cell" style="left:390.3px;width:170.7px;top:503.76px;font-size:13.3px;line-height:13.3px;font-weight:400;letter-spacing:-0.2px;color:#000">Test Kategorie</div>
<div class="t" style="left:67.6px;width:24px;text-align:center;top:523.35px;font-size:13px;line-height:13px;letter-spacing:-0.5px;color:#333">27</div>
<div class="t cell" style="left:95.8px;width:60.2px;top:523.44px;font-size:13.3px;line-height:13.3px;font-weight:400;letter-spacing:-0.2px;color:#000">14</div>
<svg style="position:absolute;left:93.5px;top:520.02px;" width="6" height="6" viewBox="0 0 6 6"><path d="M0 0 H6.2 L0 6 Z" fill="#118011"/></svg>
<div class="t cell" style="left:222.20000000000002px;width:101.05px;top:523.44px;font-size:13.3px;line-height:13.3px;font-weight:400;letter-spacing:-0.38px;color:#000">Unbenanntes Element</div>
<div class="t cell" style="left:326.55px;width:60.45px;top:523.44px;font-size:13.3px;line-height:13.3px;font-weight:400;letter-spacing:-0.2px;color:#000">frei</div>
<div class="t cell" style="left:390.3px;width:170.7px;top:523.44px;font-size:13.3px;line-height:13.3px;font-weight:400;letter-spacing:-0.2px;color:#000">Test Kategorie</div>
<div class="t" style="left:67.6px;width:24px;text-align:center;top:543.03px;font-size:13px;line-height:13px;letter-spacing:-0.5px;color:#333">28</div>
<div class="t cell" style="left:95.8px;width:60.2px;top:543.12px;font-size:13.3px;line-height:13.3px;font-weight:400;letter-spacing:-0.2px;color:#000">15</div>
<svg style="position:absolute;left:93.5px;top:539.7px;" width="6" height="6" viewBox="0 0 6 6"><path d="M0 0 H6.2 L0 6 Z" fill="#118011"/></svg>
<div class="t cell" style="left:222.20000000000002px;width:101.05px;top:543.12px;font-size:13.3px;line-height:13.3px;font-weight:400;letter-spacing:-0.38px;color:#000">Unbenanntes Element</div>
<div class="t cell" style="left:326.55px;width:60.45px;top:543.12px;font-size:13.3px;line-height:13.3px;font-weight:400;letter-spacing:-0.2px;color:#000">frei</div>
<div class="t cell" style="left:390.3px;width:170.7px;top:543.12px;font-size:13.3px;line-height:13.3px;font-weight:400;letter-spacing:-0.2px;color:#000">Test Kategorie</div>
<div class="t" style="left:67.6px;width:24px;text-align:center;top:562.71px;font-size:13px;line-height:13px;letter-spacing:-0.5px;color:#333">29</div>
<div class="t cell" style="left:95.8px;width:60.2px;top:562.80px;font-size:13.3px;line-height:13.3px;font-weight:400;letter-spacing:-0.2px;color:#000">16</div>
<svg style="position:absolute;left:93.5px;top:559.38px;" width="6" height="6" viewBox="0 0 6 6"><path d="M0 0 H6.2 L0 6 Z" fill="#118011"/></svg>
<div class="t cell" style="left:222.20000000000002px;width:101.05px;top:562.80px;font-size:13.3px;line-height:13.3px;font-weight:400;letter-spacing:-0.38px;color:#000">Unbenanntes Element</div>
<div class="t cell" style="left:326.55px;width:60.45px;top:562.80px;font-size:13.3px;line-height:13.3px;font-weight:400;letter-spacing:-0.2px;color:#000">frei</div>
<div class="t cell" style="left:390.3px;width:170.7px;top:562.80px;font-size:13.3px;line-height:13.3px;font-weight:400;letter-spacing:-0.2px;color:#000">Test Kategorie</div>
<div class="t" style="left:67.6px;width:24px;text-align:center;top:582.39px;font-size:13px;line-height:13px;letter-spacing:-0.5px;color:#333">30</div>
<div class="t cell" style="left:95.8px;width:60.2px;top:582.48px;font-size:13.3px;line-height:13.3px;font-weight:400;letter-spacing:-0.2px;color:#000">17</div>
<svg style="position:absolute;left:93.5px;top:579.06px;" width="6" height="6" viewBox="0 0 6 6"><path d="M0 0 H6.2 L0 6 Z" fill="#118011"/></svg>
<div class="t cell" style="left:222.20000000000002px;width:101.05px;top:582.48px;font-size:13.3px;line-height:13.3px;font-weight:400;letter-spacing:-0.38px;color:#000">Unbenanntes Element</div>
<div class="t cell" style="left:326.55px;width:60.45px;top:582.48px;font-size:13.3px;line-height:13.3px;font-weight:400;letter-spacing:-0.2px;color:#000">frei</div>
<div class="t cell" style="left:390.3px;width:170.7px;top:582.48px;font-size:13.3px;line-height:13.3px;font-weight:400;letter-spacing:-0.2px;color:#000">Test Kategorie</div>
<div class="t" style="left:67.6px;width:24px;text-align:center;top:602.07px;font-size:13px;line-height:13px;letter-spacing:-0.5px;color:#333">31</div>
<div class="t cell" style="left:95.8px;width:60.2px;top:602.16px;font-size:13.3px;line-height:13.3px;font-weight:400;letter-spacing:-0.2px;color:#000">18</div>
<svg style="position:absolute;left:93.5px;top:598.74px;" width="6" height="6" viewBox="0 0 6 6"><path d="M0 0 H6.2 L0 6 Z" fill="#118011"/></svg>
<div class="t cell" style="left:222.20000000000002px;width:101.05px;top:602.16px;font-size:13.3px;line-height:13.3px;font-weight:400;letter-spacing:-0.38px;color:#000">Unbenanntes Element</div>
<div class="t cell" style="left:326.55px;width:60.45px;top:602.16px;font-size:13.3px;line-height:13.3px;font-weight:400;letter-spacing:-0.2px;color:#000">frei</div>
<div class="t cell" style="left:390.3px;width:170.7px;top:602.16px;font-size:13.3px;line-height:13.3px;font-weight:400;letter-spacing:-0.2px;color:#000">Test Kategorie</div>
<div class="t" style="left:67.6px;width:24px;text-align:center;top:621.75px;font-size:13px;line-height:13px;letter-spacing:-0.5px;color:#333">32</div>
<div class="t cell" style="left:95.8px;width:60.2px;top:621.84px;font-size:13.3px;line-height:13.3px;font-weight:400;letter-spacing:-0.2px;color:#000">19</div>
<svg style="position:absolute;left:93.5px;top:618.4200000000001px;" width="6" height="6" viewBox="0 0 6 6"><path d="M0 0 H6.2 L0 6 Z" fill="#118011"/></svg>
<div class="t cell" style="left:222.20000000000002px;width:101.05px;top:621.84px;font-size:13.3px;line-height:13.3px;font-weight:400;letter-spacing:-0.38px;color:#000">Unbenanntes Element</div>
<div class="t cell" style="left:326.55px;width:60.45px;top:621.84px;font-size:13.3px;line-height:13.3px;font-weight:400;letter-spacing:-0.2px;color:#000">frei</div>
<div class="t cell" style="left:390.3px;width:170.7px;top:621.84px;font-size:13.3px;line-height:13.3px;font-weight:400;letter-spacing:-0.2px;color:#000">Test Kategorie</div>
<div class="t" style="left:67.6px;width:24px;text-align:center;top:641.43px;font-size:13px;line-height:13px;letter-spacing:-0.5px;color:#333">33</div>
<div class="t cell" style="left:95.8px;width:60.2px;top:641.52px;font-size:13.3px;line-height:13.3px;font-weight:400;letter-spacing:-0.2px;color:#000">20</div>
<svg style="position:absolute;left:93.5px;top:638.1px;" width="6" height="6" viewBox="0 0 6 6"><path d="M0 0 H6.2 L0 6 Z" fill="#118011"/></svg>
<div class="t cell" style="left:222.20000000000002px;width:101.05px;top:641.52px;font-size:13.3px;line-height:13.3px;font-weight:400;letter-spacing:-0.38px;color:#000">Unbenanntes Element</div>
<div class="t cell" style="left:326.55px;width:60.45px;top:641.52px;font-size:13.3px;line-height:13.3px;font-weight:400;letter-spacing:-0.2px;color:#000">frei</div>
<div class="t cell" style="left:390.3px;width:170.7px;top:641.52px;font-size:13.3px;line-height:13.3px;font-weight:400;letter-spacing:-0.2px;color:#000">Test Kategorie</div>
<div class="t" style="left:67.6px;width:24px;text-align:center;top:661.11px;font-size:13px;line-height:13px;letter-spacing:-0.5px;color:#333">34</div>
<div class="t cell" style="left:95.8px;width:60.2px;top:661.20px;font-size:13.3px;line-height:13.3px;font-weight:400;letter-spacing:-0.2px;color:#000">21</div>
<svg style="position:absolute;left:93.5px;top:657.78px;" width="6" height="6" viewBox="0 0 6 6"><path d="M0 0 H6.2 L0 6 Z" fill="#118011"/></svg>
<div class="t cell" style="left:222.20000000000002px;width:101.05px;top:661.20px;font-size:13.3px;line-height:13.3px;font-weight:400;letter-spacing:-0.38px;color:#000">Unbenanntes Element</div>
<div class="t cell" style="left:326.55px;width:60.45px;top:661.20px;font-size:13.3px;line-height:13.3px;font-weight:400;letter-spacing:-0.2px;color:#000">frei</div>
<div class="t cell" style="left:390.3px;width:170.7px;top:661.20px;font-size:13.3px;line-height:13.3px;font-weight:400;letter-spacing:-0.2px;color:#000">Test Kategorie</div>
<div class="t" style="left:67.6px;width:24px;text-align:center;top:680.79px;font-size:13px;line-height:13px;letter-spacing:-0.5px;color:#333">35</div>
<div class="t cell" style="left:95.8px;width:60.2px;top:680.88px;font-size:13.3px;line-height:13.3px;font-weight:400;letter-spacing:-0.2px;color:#000">22</div>
<svg style="position:absolute;left:93.5px;top:677.46px;" width="6" height="6" viewBox="0 0 6 6"><path d="M0 0 H6.2 L0 6 Z" fill="#118011"/></svg>
<div class="t cell" style="left:222.20000000000002px;width:101.05px;top:680.88px;font-size:13.3px;line-height:13.3px;font-weight:400;letter-spacing:-0.38px;color:#000">Unbenanntes Element</div>
<div class="t cell" style="left:326.55px;width:60.45px;top:680.88px;font-size:13.3px;line-height:13.3px;font-weight:400;letter-spacing:-0.2px;color:#000">frei</div>
<div class="t cell" style="left:390.3px;width:170.7px;top:680.88px;font-size:13.3px;line-height:13.3px;font-weight:400;letter-spacing:-0.2px;color:#000">Test Kategorie</div>
<div class="t" style="left:67.6px;width:24px;text-align:center;top:700.47px;font-size:13px;line-height:13px;letter-spacing:-0.5px;color:#333">36</div>
<div class="t cell" style="left:95.8px;width:60.2px;top:700.56px;font-size:13.3px;line-height:13.3px;font-weight:400;letter-spacing:-0.2px;color:#000">23</div>
<svg style="position:absolute;left:93.5px;top:697.14px;" width="6" height="6" viewBox="0 0 6 6"><path d="M0 0 H6.2 L0 6 Z" fill="#118011"/></svg>
<div class="t cell" style="left:222.20000000000002px;width:101.05px;top:700.56px;font-size:13.3px;line-height:13.3px;font-weight:400;letter-spacing:-0.38px;color:#000">Unbenanntes Element</div>
<div class="t cell" style="left:326.55px;width:60.45px;top:700.56px;font-size:13.3px;line-height:13.3px;font-weight:400;letter-spacing:-0.2px;color:#000">frei</div>
<div class="t cell" style="left:390.3px;width:170.7px;top:700.56px;font-size:13.3px;line-height:13.3px;font-weight:400;letter-spacing:-0.2px;color:#000">Test Kategorie</div>
<div class="t" style="left:67.6px;width:24px;text-align:center;top:720.15px;font-size:13px;line-height:13px;letter-spacing:-0.5px;color:#333">37</div>
<div class="t cell" style="left:95.8px;width:60.2px;top:720.24px;font-size:13.3px;line-height:13.3px;font-weight:400;letter-spacing:-0.2px;color:#000">24</div>
<svg style="position:absolute;left:93.5px;top:716.8199999999999px;" width="6" height="6" viewBox="0 0 6 6"><path d="M0 0 H6.2 L0 6 Z" fill="#118011"/></svg>
<div class="t cell" style="left:222.20000000000002px;width:101.05px;top:720.24px;font-size:13.3px;line-height:13.3px;font-weight:400;letter-spacing:-0.38px;color:#000">Unbenanntes Element</div>
<div class="t cell" style="left:326.55px;width:60.45px;top:720.24px;font-size:13.3px;line-height:13.3px;font-weight:400;letter-spacing:-0.2px;color:#000">frei</div>
<div class="t cell" style="left:390.3px;width:170.7px;top:720.24px;font-size:13.3px;line-height:13.3px;font-weight:400;letter-spacing:-0.2px;color:#000">Test Kategorie</div>
<div style="position:absolute;left:89px;top:237.2px;width:73px;height:33.6px;background:transparent;box-sizing:border-box;border:5px solid #0000FF;filter:drop-shadow(2px 2px 1.5px rgba(0,0,0,0.45))"></div>
<svg style="position:absolute;left:0px;top:0px;pointer-events:none" width="944" height="790" viewBox="0 0 944 790"><defs><filter id="sh" x="-20%" y="-20%" width="140%" height="140%"><feGaussianBlur stdDeviation="1.5"/></filter></defs>
<g transform="translate(2.5,2.5)" opacity="0.45" filter="url(#sh)"><path d="M145.9 286.7 L176.8 316.4 L168.1 321.4 L246.8 472.5 L241.1 475.6 L162 324.4 L152.8 328.6 Z" fill="#000"/></g>
<path d="M145.9 286.7 L176.8 316.4 L168.1 321.4 L246.8 472.5 L241.1 475.6 L162 324.4 L152.8 328.6 Z" fill="#0000FF"/></svg>
<div style="position:absolute;left:875px;top:0px;width:69px;height:790px;background:#000;"></div>
<div style="position:absolute;left:0px;top:733px;width:944px;height:57px;background:#000;"></div>
</body></html>
